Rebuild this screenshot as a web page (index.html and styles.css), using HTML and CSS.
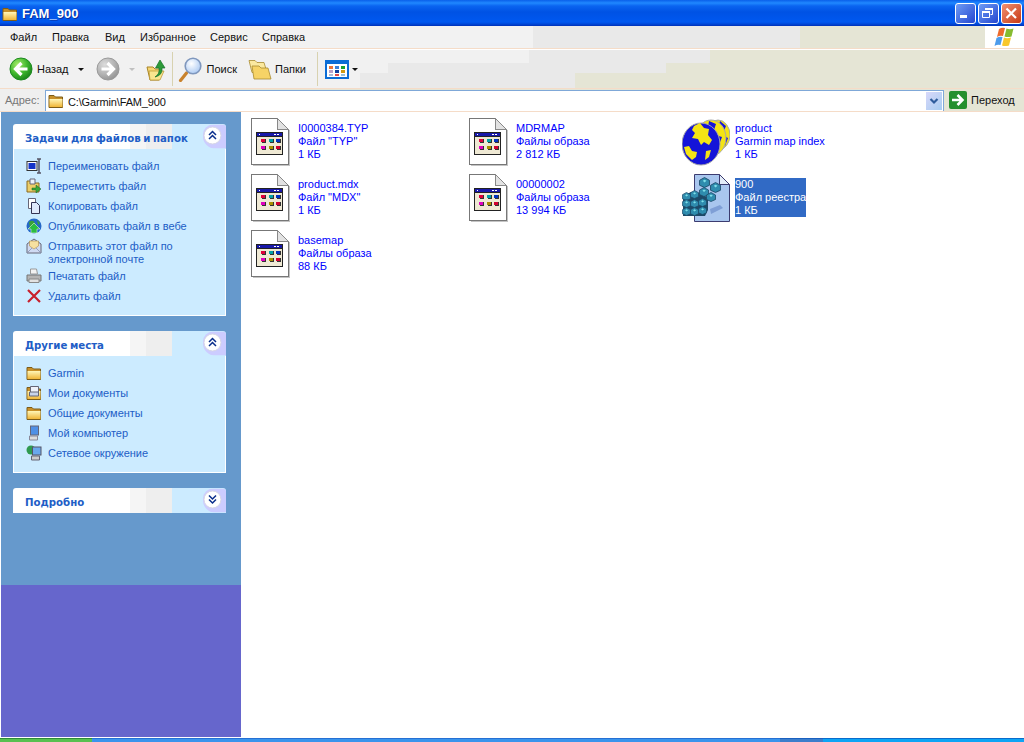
FILE: index.html
```html
<!DOCTYPE html>
<html lang="ru">
<head>
<meta charset="utf-8">
<title>FAM_900</title>
<link rel="stylesheet" href="styles.css">
</head>
<body>
<svg class="defs" width="0" height="0" aria-hidden="true">
  <defs>
    <linearGradient id="fold" x1="0" y1="0" x2="0" y2="1"><stop offset="0" stop-color="#fff6b8"/><stop offset="1" stop-color="#f0b638"/></linearGradient>
    <radialGradient id="greenball" cx=".35" cy=".3" r=".8"><stop offset="0" stop-color="#a6ec6a"/><stop offset=".55" stop-color="#3cb52c"/><stop offset="1" stop-color="#147a18"/></radialGradient>
    <radialGradient id="greyball" cx=".35" cy=".3" r=".8"><stop offset="0" stop-color="#dcdcdc"/><stop offset=".6" stop-color="#b0b0b0"/><stop offset="1" stop-color="#8e8e8e"/></radialGradient>
    <radialGradient id="lens" cx=".4" cy=".35" r=".7"><stop offset="0" stop-color="#ffffff"/><stop offset="1" stop-color="#a9c8f2"/></radialGradient>
    <symbol id="folder" viewBox="0 0 16 16">
      <path d="M1 5V2.500h5l1.500 1.500h7v10.500H1z" fill="#c89028" stroke="#7c5c18"/>
      <path d="M1.500 6h13v8h-13z" fill="url(#fold)"/>
    </symbol>
    <symbol id="doc" viewBox="1 0 48 48">
      <path d="M1.500.5h26l11 11v35H1.500z" fill="#fff" stroke="#777"/>
      <path d="M27.500.5v11h11z" fill="#e2e2e2" stroke="#888"/>
      <path d="M39.500 12v35.500H2.500" fill="none" stroke="#c4c4c4"/>
      <rect x="6" y="14" width="27" height="23" fill="#222"/>
      <rect x="7" y="15" width="25" height="3" fill="#1818a8"/>
      <rect x="9" y="16" width="1" height="1" fill="#fff"/><rect x="24" y="16" width="2" height="1" fill="#fff"/><rect x="27" y="16" width="2" height="1" fill="#fff"/>
      <rect x="7" y="19" width="25" height="17" fill="#efe9d4"/>
      <path d="M12 25h4v-4h-1v3h-3zM20 25h4v-4h-1v3h-3zM27 25h4v-4h-1v3h-3zM12 32h4v-4h-1v3h-3zM20 32h4v-4h-1v3h-3zM27 32h4v-4h-1v3h-3z" fill="#333"/>
      <rect x="11" y="21" width="4" height="3" fill="#e0003a"/><rect x="19" y="21" width="4" height="3" fill="#00a0a8"/><rect x="26" y="21" width="4" height="3" fill="#0032c0"/>
      <rect x="11" y="28" width="4" height="3" fill="#e000c0"/><rect x="19" y="28" width="4" height="3" fill="#a89000"/><rect x="26" y="28" width="4" height="3" fill="#d00030"/>
    </symbol>
    <symbol id="chev-up" viewBox="0 0 23 24">
      <path d="M0 10a10 10 0 0 1 10-10h11l2 2v22H12A12 12 0 0 1 0 12z" fill="#ccccff"/>
      <circle cx="9.500" cy="11" r="8.500" fill="#fff" stroke="#d6d6e6"/>
      <path d="M6 10.500 9.500 7l3.500 3.500M6 14.500 9.500 11l3.500 3.500" fill="none" stroke="#0a2e8c" stroke-width="1.500"/>
    </symbol>
    <symbol id="chev-down" viewBox="0 0 23 24">
      <path d="M0 10a10 10 0 0 1 10-10h11l2 2v22H12A12 12 0 0 1 0 12z" fill="#ccccff"/>
      <circle cx="9.500" cy="11" r="8.500" fill="#fff" stroke="#d6d6e6"/>
      <path d="M6 7l3.500 3.500L13 7M6 11l3.500 3.500L13 11" fill="none" stroke="#0a2e8c" stroke-width="1.500"/>
    </symbol>
    <symbol id="cube" viewBox="0 0 10 10">
      <path d="M5 .5 9.500 3v4.500L5 9.500.5 7.500V3z" fill="#2f8cae" stroke="#1d4a68" stroke-width=".8"/>
      <path d="M3.500 3.500 5 2.500l1.800 1L5 5z" fill="#7fe0e8"/>
    </symbol>
  </defs>
</svg>

<div class="window">
  <header class="titlebar">
    <svg class="title-icon" viewBox="0 0 16 16"><use href="#folder"/></svg>
    <span class="title-text">FAM_900</span>
    <div class="win-buttons">
      <span class="win-btn"><svg viewBox="0 0 19 19"><rect x="4" y="11" width="7" height="3" fill="#fff"/></svg></span>
      <span class="win-btn"><svg viewBox="0 0 19 19"><path d="M6.500 4.500h7v6h-2M3.500 7.500h7v6h-7z" fill="none" stroke="#fff"/><path d="M3 7h8v2H3zM6 4h8v2H6z" fill="#fff"/></svg></span>
      <span class="win-btn win-close"><svg viewBox="0 0 19 19"><path d="M4.500 4.500l9.500 9.500M14 4.500 4.500 14" stroke="#fff" stroke-width="2.200"/></svg></span>
    </div>
  </header>

  <nav class="menubar">
    <span class="menu-item">Файл</span>
    <span class="menu-item">Правка</span>
    <span class="menu-item">Вид</span>
    <span class="menu-item">Избранное</span>
    <span class="menu-item">Сервис</span>
    <span class="menu-item">Справка</span>
    <div class="flag-box">
      <svg viewBox="0 0 22 22" width="22" height="22">
        <path d="M5 3q3-2 6-1l-2 8q-3-1-6 1z" fill="#ee6a2c"/>
        <path d="M12.500 2.500q3 1.500 7 0l-2 8q-4 1-7 0z" fill="#86bb30"/>
        <path d="M2.500 12q3-2 6-1l-2 8q-3-1-6 1z" fill="#4c9cec"/>
        <path d="M10 11.500q3 1.500 7 0l-2 8q-4 1-7 0z" fill="#f8c82c"/>
      </svg>
    </div>
  </nav>

  <div class="toolbar">
    <button class="tb-btn tb-back">
      <svg class="tb-round" viewBox="0 0 24 24"><circle cx="12" cy="12" r="11" fill="url(#greenball)" stroke="#1c8a20"/><path d="M18.500 12H8M12.500 6 6.500 12l6 6" fill="none" stroke="#fff" stroke-width="3.200"/></svg>
      <span>Назад</span>
      <i class="caret"></i>
    </button>
    <button class="tb-btn tb-forward">
      <svg class="tb-round" viewBox="0 0 24 24"><circle cx="12" cy="12" r="11" fill="url(#greyball)" stroke="#9a9a9a"/><path d="M5.500 12H16M11.500 6l6 6-6 6" fill="none" stroke="#fff" stroke-width="3.200"/></svg>
      <i class="caret caret-off"></i>
    </button>
    <span class="tb-icon">
      <svg viewBox="0 0 20 24" width="20" height="24"><path d="M1 10h6l2 2h6l-2 11H4z" fill="#f6d672" stroke="#a88428"/><path d="M3 14h15l-4 9H4z" fill="#f9e58e" stroke="#b8922c" stroke-width=".7"/><path d="M9 20q5-3 4-9H9.500L14 3l5 8h-3q1 7-7 9z" fill="#2c9a38" stroke="#14702a" stroke-width=".7"/></svg>
    </span>
    <i class="tb-sep"></i>
    <button class="tb-btn tb-search">
      <svg viewBox="0 0 26 26" width="26" height="26"><path d="M3.500 24.500 9.500 17" stroke="#c9822c" stroke-width="3.200" stroke-linecap="round"/><circle cx="16" cy="10" r="7.800" fill="url(#lens)" stroke="#7f97bd" stroke-width="1.600"/></svg>
      <span>Поиск</span>
    </button>
    <button class="tb-btn tb-folders">
      <svg viewBox="0 0 24 24" width="24" height="24"><path d="M1 3.500h6l2 2h7l3 10H4z" fill="#fbe9a0" stroke="#a88a30" stroke-width=".8"/><path d="M4 9h7l2 2h7l3 11H6z" fill="#f6d366" stroke="#a88a30" stroke-width=".8"/></svg>
      <span>Папки</span>
    </button>
    <i class="tb-sep tb-sep2"></i>
    <span class="tb-views">
      <svg viewBox="0 0 24 19" width="24" height="19"><rect x="1" y="1" width="22" height="17" fill="#fff" stroke="#0a6cd6" stroke-width="2"/><rect x="1" y="1" width="22" height="3" fill="#0a6cd6"/><path d="M4 6h4v3H4z" fill="#e8743c"/><path d="M10 6h4v3h-4z" fill="#3a80d8"/><path d="M16 6h4v3h-4z" fill="#18a030"/><path d="M4 10h4v3H4z" fill="#b8a0c8"/><path d="M10 10h4v3h-4z" fill="#1040a0"/><path d="M16 10h4v3h-4z" fill="#d09810"/><path d="M4 14h4v2H4z" fill="#a8b8d8"/><path d="M10 14h4v2h-4z" fill="#e04848"/><path d="M16 14h4v2h-4z" fill="#98c0d8"/></svg>
      <i class="caret"></i>
    </span>
  </div>

  <div class="addressbar">
    <span class="addr-label">Адрес:</span>
    <div class="addr-field">
      <svg class="addr-folder" viewBox="0 0 16 16"><use href="#folder"/></svg>
      <span class="addr-text">C:\Garmin\FAM_900</span>
      <span class="addr-drop"><svg viewBox="0 0 16 16" width="16" height="16"><path d="M4.500 6l3.500 3.500L11.500 6" fill="none" stroke="#2f5c9c" stroke-width="2.200"/></svg></span>
    </div>
    <span class="addr-go">
      <svg viewBox="0 0 18 18" width="18" height="18"><rect width="18" height="18" rx="2" fill="#25902e"/><path d="M3 9h10M8.500 4l5 5-5 5" fill="none" stroke="#fff" stroke-width="2.500"/></svg>
      <span>Переход</span>
    </span>
  </div>

  <main class="content">
    <aside class="sidebar">
      <section class="panel">
        <div class="panel-head">
          <span class="panel-title">Задачи для файлов и папок</span>
          <svg class="panel-chev" viewBox="0 0 23 24"><use href="#chev-up"/></svg>
        </div>
        <ul class="panel-body">
          <li><svg class="li-icon" viewBox="0 0 16 16"><rect x="1" y="3.500" width="10" height="9" fill="#fff" stroke="#333"/><rect x="2.500" y="5" width="7" height="6" fill="#1434c8"/><path d="M13 1v14M11 1h4M11 15h4" stroke="#556" stroke-width="1.500"/></svg><span>Переименовать файл</span></li>
          <li><svg class="li-icon" viewBox="0 0 16 16"><path d="M1 3h5l1 2h6v9H1z" fill="#ecce68" stroke="#8a6a20"/><path d="M4 1h5v5H4z" fill="#eef2fa" stroke="#667"/><path d="M6 10h4V7l5 4-5 4v-3H6z" fill="#3aa83a" stroke="#1a601a" stroke-width=".5"/></svg><span>Переместить файл</span></li>
          <li><svg class="li-icon" viewBox="0 0 16 16"><path d="M2.500.5h7v10h-7z" fill="#fff" stroke="#667"/><path d="M5.500 4.500h5l3 3v8h-8z" fill="#dfeafc" stroke="#335"/></svg><span>Копировать файл</span></li>
          <li><svg class="li-icon" viewBox="0 0 16 16"><circle cx="8" cy="8" r="7.500" fill="#2468c8"/><path d="M3 4q4-3 6 1t-5 5zM11 2l3 3-2 2z" fill="#3aa03a"/><path d="M8 5l6 6h-3v4H5v-4H2z" fill="#2cbc40" stroke="#fff" stroke-width=".5"/></svg><span>Опубликовать файл в вебе</span></li>
          <li><svg class="li-icon" viewBox="0 0 16 16"><path d="M1 6l7-5 7 5v9H1z" fill="#cfdaf2" stroke="#667"/><path d="M3.500 3h9v5L8 11 3.500 8z" fill="#f6e0a0" stroke="#b08c48" stroke-width=".6"/><path d="M1 15l5-5M15 15l-5-5" stroke="#8890b0" stroke-width=".8"/></svg><span>Отправить этот файл по электронной почте</span></li>
          <li><svg class="li-icon" viewBox="0 0 16 16"><path d="M4.500 1h6l1 5h-7z" fill="#f2f2f2" stroke="#999"/><path d="M1 7h14v6H1z" fill="#b4b4b4" stroke="#777"/><path d="M3 11h10v3.500H3z" fill="#e2e2e2" stroke="#888"/></svg><span>Печатать файл</span></li>
          <li><svg class="li-icon" viewBox="0 0 16 16"><path d="M2 2l12 12M14 2 2 14" stroke="#c8202c" stroke-width="2.200"/></svg><span>Удалить файл</span></li>
        </ul>
      </section>

      <section class="panel">
        <div class="panel-head">
          <span class="panel-title">Другие места</span>
          <svg class="panel-chev" viewBox="0 0 23 24"><use href="#chev-up"/></svg>
        </div>
        <ul class="panel-body">
          <li><svg class="li-icon" viewBox="0 0 16 16"><use href="#folder"/></svg><span>Garmin</span></li>
          <li><svg class="li-icon" viewBox="0 0 16 16"><use href="#folder"/><path d="M4.500 1.500h8v6h-8z" fill="#eef2fa" stroke="#667"/><path d="M3.500 7h9v4h-9z" fill="#c8d4ea" stroke="#667"/></svg><span>Мои документы</span></li>
          <li><svg class="li-icon" viewBox="0 0 16 16"><use href="#folder"/></svg><span>Общие документы</span></li>
          <li><svg class="li-icon" viewBox="0 0 16 16"><rect x="4.500" y="1" width="8" height="9" fill="#4f90e6" stroke="#667"/><path d="M3.500 11h8v4h-8z" fill="#ddd" stroke="#889"/></svg><span>Мой компьютер</span></li>
          <li><svg class="li-icon" viewBox="0 0 16 16"><circle cx="5" cy="5" r="4.500" fill="#2f9a50"/><rect x="6.500" y="2" width="8.500" height="8" fill="#6aa8ec" stroke="#556"/><path d="M5.500 11h8v4h-8z" fill="#ccc" stroke="#667"/></svg><span>Сетевое окружение</span></li>
        </ul>
      </section>

      <section class="panel">
        <div class="panel-head">
          <span class="panel-title">Подробно</span>
          <svg class="panel-chev" viewBox="0 0 23 24"><use href="#chev-down"/></svg>
        </div>
      </section>
    </aside>

    <section class="files">
      <div class="file"><svg class="file-icon icon-doc" viewBox="0 0 48 48"><use href="#doc"/></svg><div class="file-text"><span>I0000384.TYP</span><span>Файл "TYP"</span><span>1 КБ</span></div></div>
      <div class="file"><svg class="file-icon icon-doc" viewBox="0 0 48 48"><use href="#doc"/></svg><div class="file-text"><span>MDRMAP</span><span>Файлы образа</span><span>2 812 КБ</span></div></div>
      <div class="file file-wide">
        <svg class="file-icon" viewBox="0 0 48 48">
          <ellipse cx="36" cy="17" rx="12" ry="15" fill="#f4e414" stroke="#a8a8a8"/>
          <path d="M38 3l6 5-3 7-5-4zM42 18l4 2-3 8-3-2z" fill="#1414d8"/>
          <ellipse cx="29" cy="20" rx="15" ry="18" fill="#f4e414" stroke="#a8a8a8"/>
          <path d="M27 3l7 3-2 6-6-3zM33 17l7 2-3 8-5-3zM27 28l5 3-4 6z" fill="#1414d8"/>
          <ellipse cx="19" cy="26" rx="19" ry="21" fill="#1414d8" stroke="#a8a8a8"/>
          <path d="M12 8l6-3 4 5 5 1-1 6 4 5-3 5-5-3-3 3-3-6-6-1 3-5-3-3zM2 29l5-1 3 5 5 1-1 5-4 3-6-6zM24 33l5-1-2 7-4 3z" fill="#f4e414"/>
        </svg>
        <div class="file-text"><span>product</span><span>Garmin map index</span><span>1 КБ</span></div>
      </div>
      <div class="file"><svg class="file-icon icon-doc" viewBox="0 0 48 48"><use href="#doc"/></svg><div class="file-text"><span>product.mdx</span><span>Файл "MDX"</span><span>1 КБ</span></div></div>
      <div class="file"><svg class="file-icon icon-doc" viewBox="0 0 48 48"><use href="#doc"/></svg><div class="file-text"><span>00000002</span><span>Файлы образа</span><span>13 994 КБ</span></div></div>
      <div class="file file-wide file-selected">
        <svg class="file-icon" viewBox="0 0 48 48">
          <path d="M12.500.5h25l10 10v37h-35z" fill="#a9c6ee" stroke="#3c3c70"/>
          <path d="M37.500.5v10h10z" fill="#e4edf9" stroke="#3c3c70"/>
          <path d="M28 35l10-4 3 3-12 6z" fill="#7f9fd6"/>
          <path d="M1 22l8-4 10 1 7 5v12l-3 6H1z" fill="#1d4a68"/>
          <use href="#cube" x="17" y="3" width="11" height="11"/>
          <use href="#cube" x="28" y="8" width="11" height="11"/>
          <use href="#cube" x="17" y="13" width="10" height="10"/>
          <use href="#cube" x="24" y="18" width="10" height="10"/>
          <use href="#cube" x="0" y="18" width="9" height="9"/><use href="#cube" x="8" y="16" width="9" height="9"/>
          <use href="#cube" x="0" y="25" width="9" height="9"/><use href="#cube" x="8" y="25" width="9" height="9"/><use href="#cube" x="16" y="24" width="9" height="9"/>
          <use href="#cube" x="0" y="33" width="9" height="9"/><use href="#cube" x="8" y="33" width="9" height="9"/><use href="#cube" x="16" y="32" width="9" height="9"/>
        </svg>
        <div class="file-text"><span>900</span><span>Файл реестра</span><span>1 КБ</span></div>
      </div>
      <div class="file"><svg class="file-icon icon-doc" viewBox="0 0 48 48"><use href="#doc"/></svg><div class="file-text"><span>basemap</span><span>Файлы образа</span><span>88 КБ</span></div></div>
    </section>
  </main>

  <footer class="taskbar">
    <div class="start"></div>
    <div class="task-mid"></div>
    <div class="task-btn"></div>
    <div class="task-tray"></div>
  </footer>
</div>
</body>
</html>
```
FILE: styles.css
```css
* { box-sizing: border-box; }
html, body { margin: 0; padding: 0; }
body { width: 1024px; height: 742px; overflow: hidden; background: #fff; font-family: "Liberation Sans", sans-serif; font-size: 11px; }
.defs { position: absolute; }
.window { display: flex; flex-direction: column; width: 1024px; height: 742px; }

.titlebar { flex: 0 0 26px; display: flex; align-items: center; padding: 1px 2px 0 2px; background: linear-gradient(#0a60ea 0, #2088ff 3px, #0a64f0 6px, #0052e4 12px, #0058f0 22px, #0048d8 24px, #0030b8 26px); }
.title-icon { width: 16px; height: 16px; }
.title-text { margin-left: 4px; color: #fff; font: bold 13px "Liberation Sans", sans-serif; text-shadow: 1px 1px 0 #0a2f9c; }
.win-buttons { margin-left: auto; display: flex; gap: 2px; }
.win-btn { width: 21px; height: 21px; border: 1px solid #fff; border-radius: 3px; background: linear-gradient(135deg, #6f9cf4, #2446d0); }
.win-btn svg { display: block; width: 19px; height: 19px; }
.win-close { background: linear-gradient(135deg, #f09070, #c83a16); }

.menubar { flex: 0 0 23px; display: flex; align-items: center; padding-left: 2px; border-bottom: 1px solid #f5dcc8; background: linear-gradient(90deg, #f2f2f2 533px, #e9e9e9 533px, #e9e9e9 800px, #e5e5d5 800px); }
.menu-item { padding-left: 8px; color: #111; }
.menu-item:nth-child(1) { width: 42px; }
.menu-item:nth-child(2) { width: 53px; }
.menu-item:nth-child(3) { width: 35px; }
.menu-item:nth-child(4) { width: 70px; }
.menu-item:nth-child(5) { width: 52px; }
.flag-box { margin-left: auto; width: 39px; height: 22px; background: #fff; display: flex; justify-content: center; }

.toolbar { flex: 0 0 40px; display: flex; align-items: center; padding: 1px 0 1px 9px; border-top: 1px solid #fff; border-bottom: 1px solid #f5dcc8; color: #111;
  background:
    linear-gradient(90deg, #f1f1f1 529px, #e9e9e9 529px, #e9e9e9 710px, #e5e5d5 710px) top / 100% 13px no-repeat,
    linear-gradient(90deg, #f1f1f1 388px, #e9e9e9 388px, #e9e9e9 666px, #e5e5d5 666px) 0 13px / 100% 10px no-repeat,
    linear-gradient(90deg, #f1f1f1 360px, #e9e9e9 360px, #e9e9e9 575px, #e5e5d5 575px); }
.tb-btn { display: flex; align-items: center; border: 0; background: none; padding: 0; font: inherit; color: inherit; }
.tb-round { width: 24px; height: 24px; }
.tb-back span { margin-left: 4px; }
.caret { display: inline-block; width: 0; height: 0; border: 3px solid transparent; border-top: 3px solid #111; border-bottom: 0; margin-left: 9px; }
.caret-off { border-top-color: #c0c0c0; }
.tb-forward { margin-left: 12px; }
.tb-icon { margin-left: 11px; display: flex; }
.tb-sep { width: 1px; height: 34px; background: #d8d2b0; margin-left: 6px; }
.tb-search { margin-left: 4px; }
.tb-search span { margin-left: 4px; }
.tb-folders { margin-left: 11px; }
.tb-folders span { margin-left: 3px; }
.tb-sep2 { margin-left: 11px; }
.tb-views { display: flex; align-items: center; margin-left: 7px; }
.tb-views .caret { margin-left: 3px; }

.addressbar { flex: 0 0 23px; display: flex; align-items: flex-start; padding: 1px 0 0 5px; border-bottom: 1px solid #f5dcc8; background: linear-gradient(90deg, #efefef 45px, #e5e5d5 45px); }
.addr-label { width: 40px; color: #777; line-height: 21px; }
.addr-field { width: 899px; height: 21px; display: flex; align-items: center; padding: 0 1px 0 2px; background: #fff; border: 1px solid #7fa8d8; border-bottom: 0; }
.addr-folder { width: 16px; height: 16px; }
.addr-text { margin-left: 4px; color: #111; letter-spacing: -.15px; position: relative; top: 1px; }
.addr-drop { margin-left: auto; width: 16px; height: 18px; background: linear-gradient(135deg, #d8d8fa, #a8ccf0); display: flex; align-items: center; justify-content: center; }
.addr-go { display: flex; align-items: center; margin: 1px 0 0 5px; gap: 4px; color: #111; }

.content { flex: 1 1 auto; display: flex; min-height: 0; }
.sidebar { flex: 0 0 240px; margin-left: 1px; padding: 12px 15px 0 12px; display: flex; flex-direction: column; gap: 15px; background: linear-gradient(#6699cc 473px, #6666cc 473px); }
.panel { display: flex; flex-direction: column; }
.panel-head { height: 25px; display: flex; align-items: center; justify-content: space-between; padding: 0 0 0 12px; border-radius: 3px 3px 0 0; background: linear-gradient(90deg, #fff 117px, #f5f5f5 117px, #f5f5f5 133px, #eeeeee 133px, #eeeeee 159px, #ccebff 159px); }
.panel-title { color: #215dc6; font-weight: bold; font-size: 10.2px; word-spacing: -1px; font-family: "DejaVu Sans", sans-serif; padding-top: 3px; white-space: nowrap; }
.panel-chev { width: 23px; height: 25px; }
.panel-body { list-style: none; margin: 0; padding: 9px 12px 7px 12px; background: #ccebff; border: 1px solid #fff; border-top: 0; }
.panel-body li { display: flex; gap: 6px; min-height: 20px; color: #215dc6; line-height: 13px; padding: 2px 0 2px; }
.li-icon { flex: 0 0 16px; width: 16px; height: 16px; margin-top: -2px; }

.files { flex: 1 1 auto; padding: 6px 0 0 10px; display: grid; grid-template-columns: 218px 213px 1fr; grid-auto-rows: 56px; align-content: start; }
.file { display: flex; align-items: flex-start; }
.file-icon { width: 48px; height: 48px; flex: 0 0 48px; }
.icon-doc { margin-right: -1px; shape-rendering: crispEdges; }
.file-wide .file-icon { margin-right: 5px; }
.file-text { display: flex; flex-direction: column; color: #0000ff; line-height: 13px; margin-top: 4px; }
.file-selected .file-text { background: #316ac5; color: #fff; }

.taskbar { flex: 0 0 4px; display: flex; margin-top: 1px; }
.start { width: 92px; background: linear-gradient(#2f8a38 1px, #58c050 1px); }
.task-mid { flex: 1 1 auto; background: linear-gradient(#2570d4 1px, #3a94ec 1px); }
.task-btn { width: 43px; background: linear-gradient(#1a60c0 1px, #3c7ecc 1px); }
.task-tray { width: 201px; background: linear-gradient(#0a6ccc 1px, #0ea4f4 1px); }
```
